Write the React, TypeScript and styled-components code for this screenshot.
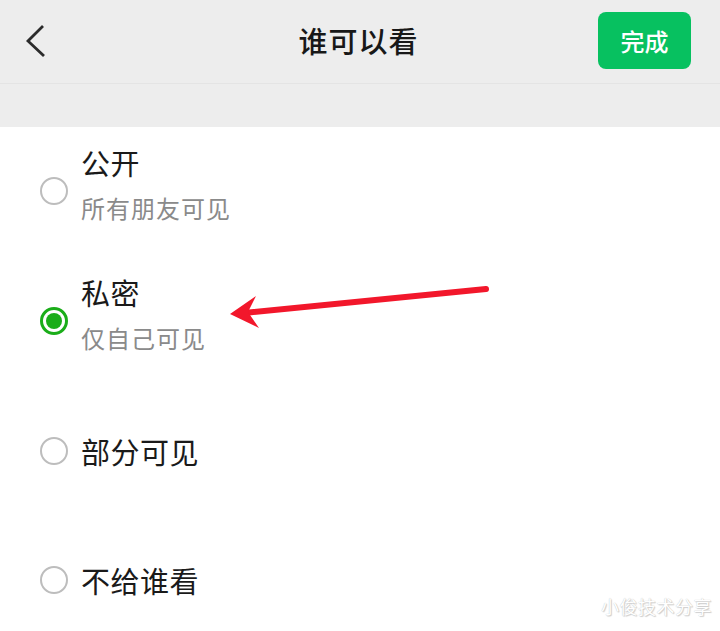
import React from 'react';
import styled, { createGlobalStyle } from 'styled-components';

const GlobalStyle = createGlobalStyle`
  html, body {
    margin: 0;
    padding: 0;
    background: #ffffff;
  }
  body {
    font-family: "Noto Sans CJK SC", "Noto Sans", sans-serif;
  }
`;

const Page = styled.div`
  position: relative;
  width: 720px;
  height: 631px;
  overflow: hidden;
  background: #ffffff;
`;

const Header = styled.header`
  display: grid;
  grid-template-columns: 1fr auto 1fr;
  align-items: center;
  height: 83px;
  padding: 0 29px 0 26px;
  background: #ededed;
  border-bottom: 1px solid #e4e4e4;
`;

const BackButton = styled.button`
  justify-self: start;
  display: flex;
  align-items: center;
  padding: 0;
  border: none;
  background: none;
  width: 24px;
  height: 40px;
  margin-top: -2px;
`;

const Title = styled.h1`
  margin: 0;
  font-size: 29px;
  font-weight: 500;
  color: #181818;
  letter-spacing: 1px;
  margin-top: -4px;
`;

const DoneButton = styled.button`
  justify-self: end;
  width: 93px;
  height: 57px;
  margin-top: -3px;
  border: none;
  border-radius: 8px;
  background: #07c160;
  color: #ffffff;
  font-family: "Noto Sans CJK SC", sans-serif;
  font-size: 24px;
  font-weight: 500;
`;

const Band = styled.div`
  height: 43px;
  background: #ededed;
`;

const List = styled.div`
  display: flex;
  flex-direction: column;
  padding: 15px 0 0 40px;
`;

const Option = styled.div<{ $space: number }>`
  display: flex;
  align-items: center;
  gap: 13px;
  margin-top: ${(p) => p.$space}px;
`;

const Radio = styled.span<{ $checked?: boolean; $twoLine?: boolean }>`
  box-sizing: border-box;
  flex: none;
  width: 28px;
  height: 28px;
  border-radius: 50%;
  border: ${(p) => (p.$checked ? '3px solid #1aad19' : '2px solid #bdbdbd')};
  display: flex;
  align-items: center;
  justify-content: center;
  align-self: ${(p) => (p.$twoLine ? 'flex-start' : 'center')};
  margin-top: ${(p) => (p.$twoLine ? '35px' : '0')};
`;

const Dot = styled.span`
  width: 16px;
  height: 16px;
  border-radius: 50%;
  background: #1aad19;
`;

const Texts = styled.div`
  display: flex;
  flex-direction: column;
  gap: 8px;
`;

const OptionTitle = styled.div`
  font-size: 29px;
  line-height: 40px;
  color: #1a1a1a;
  letter-spacing: 0.5px;
`;

const OptionSub = styled.div`
  font-size: 24px;
  line-height: 36px;
  color: #8a8a8a;
  letter-spacing: 1px;
`;

const Overlay = styled.svg`
  position: absolute;
  left: 0;
  top: 0;
  pointer-events: none;
`;

const Watermark = styled.div`
  position: absolute;
  right: 8px;
  bottom: 12px;
  font-size: 18px;
  color: #ffffff;
  letter-spacing: 0.5px;
  text-shadow: 0 0 1px #b8b8b8, 1px 1px 1px #cfcfcf;
`;

const options = [
  { title: '公开', sub: '所有朋友可见', space: 0 },
  { title: '私密', sub: '仅自己可见', space: 46, checked: true },
  { title: '部分可见', space: 75 },
  { title: '不给谁看', space: 89 },
];

export default function App() {
  return (
    <Page>
      <GlobalStyle />
      <Header>
        <BackButton aria-label="返回">
          <svg width="20" height="34" viewBox="0 0 20 34">
            <polyline points="17,2 2,17 18,32" fill="none" stroke="#2b2b2b" strokeWidth="2.8" />
          </svg>
        </BackButton>
        <Title>谁可以看</Title>
        <DoneButton>完成</DoneButton>
      </Header>
      <Band />
      <List>
        {options.map((o) => (
          <Option key={o.title} $space={o.space}>
            <Radio $checked={o.checked} $twoLine={!!o.sub}>
              {o.checked && <Dot />}
            </Radio>
            <Texts>
              <OptionTitle>{o.title}</OptionTitle>
              {o.sub && <OptionSub>{o.sub}</OptionSub>}
            </Texts>
          </Option>
        ))}
      </List>
      <Overlay width="720" height="631" viewBox="0 0 720 631">
        <line x1="486" y1="289" x2="244" y2="313" stroke="#f2172b" strokeWidth="6" strokeLinecap="round" />
        <polygon points="230,314 256,296 248,312 259,328" fill="#f2172b" />
      </Overlay>
      <Watermark>小俊技术分享</Watermark>
    </Page>
  );
}
